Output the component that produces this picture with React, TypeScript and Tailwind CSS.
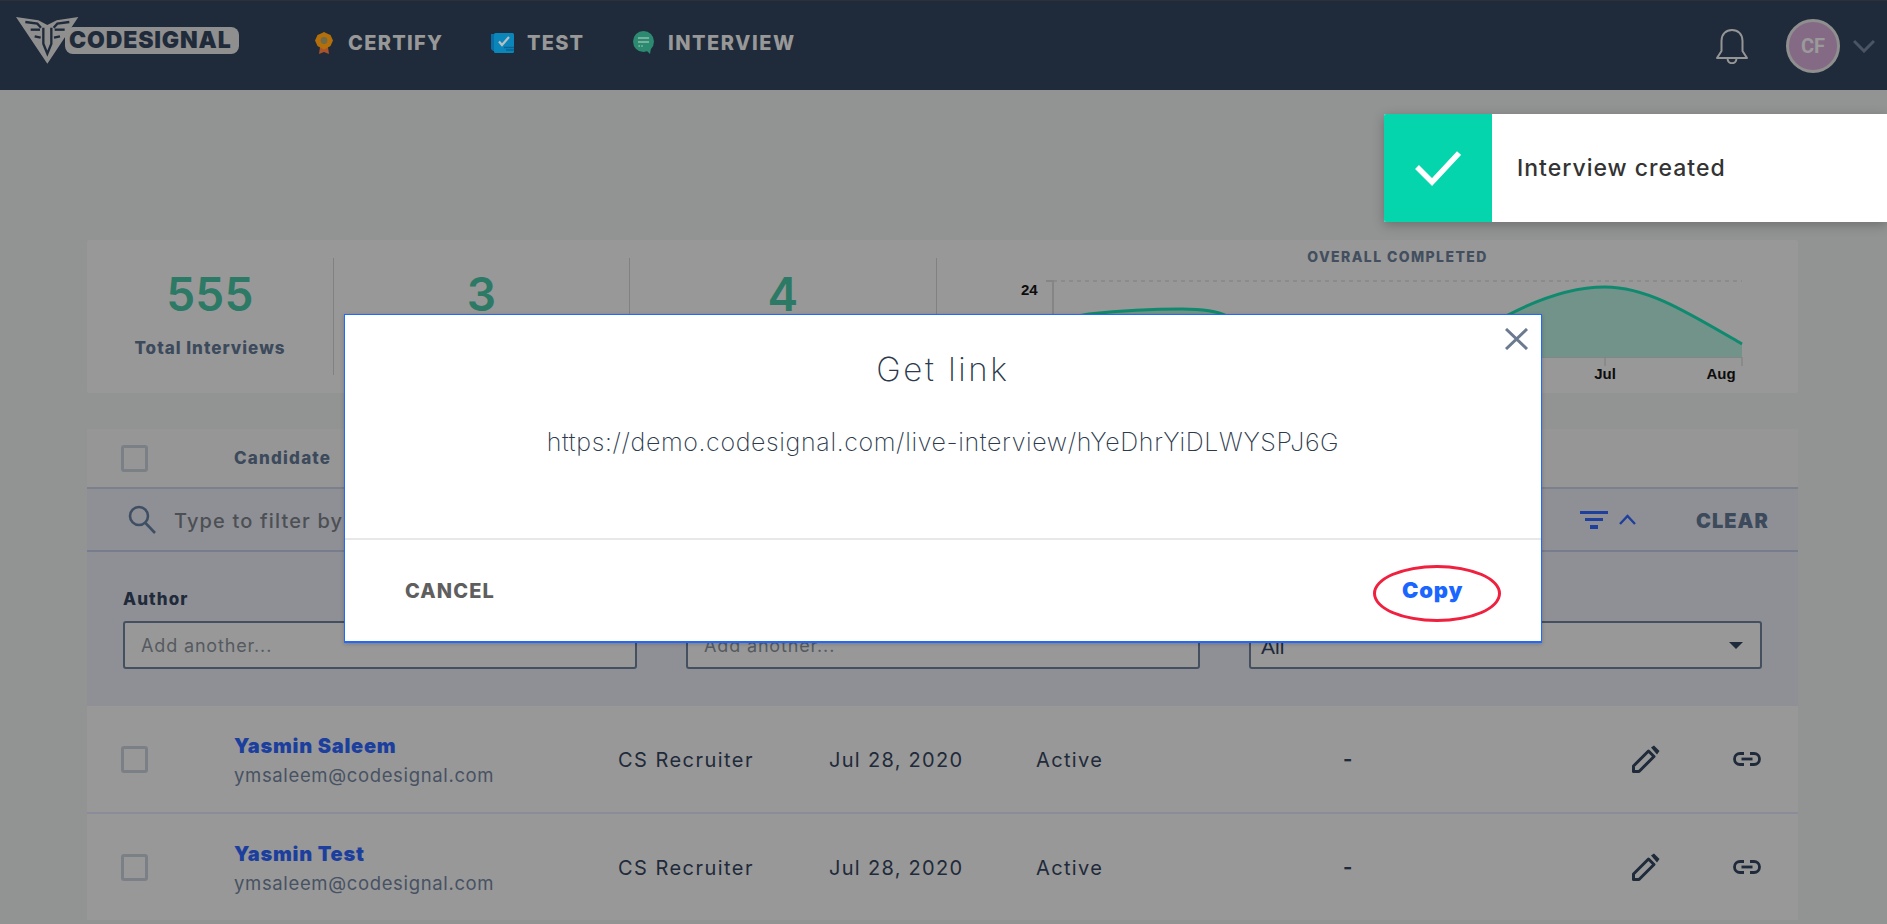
const sans = "font-['Inter',sans-serif]";

function Logo() {
  return (
    <div className="relative w-[230px] h-[60px] shrink-0 -mt-[10px]">
      <svg viewBox="0 0 270 180" className="absolute left-0 top-0 w-[90px] h-[60px]" fill="none">
        <path d="M18 18 L85 28 L112 42 L140 28 L205 18 L112 158 Z" fill="#8f8f8f" />
        <g stroke="#1f2b3a" strokeWidth="7">
          <path d="M46 33 L82 38 L93 50" />
          <path d="M62 56 L90 56" />
          <path d="M74 76 L92 80" />
          <path d="M100 50 L100 98 L112 128 L124 98 L124 50" />
          <path d="M178 33 L142 38 L131 50" />
          <path d="M164 56 L134 56" />
          <path d="M150 76 L132 80" />
        </g>
      </svg>
      <div className={`absolute left-[55px] top-[16px] w-[174px] h-[27px] rounded-[8px] bg-[#8f8f8f] flex items-center pl-[4px] pt-[1px] ${sans} font-black text-[23px] leading-none tracking-[0.85px] text-[#1f2b3a]`}>CODESIGNAL</div>
    </div>
  );
}

function NavItem({ icon, label, active, w, track }: { icon: React.ReactNode; label: string; active?: boolean; w: string; track: string }) {
  return (
    <div className={`relative h-[89px] pb-[6px] flex items-center gap-[15px] ${w}`}>
      {icon}
      <span className={`${sans} font-extrabold text-[20px] ${track} text-[#989898]`}>{label}</span>
      {active && <div className="absolute left-0 right-0 bottom-0 h-[6px] bg-[#2d7f6a]" />}
    </div>
  );
}

function Check({ className }: { className: string }) {
  return <div className={`w-[27px] h-[27px] rounded-[3px] border-[3px] border-[#7b8087] shrink-0 ${className}`} />;
}

function Pencil() {
  return (
    <svg viewBox="0 0 28 28" className="w-[28px] h-[28px]" fill="none">
      <path d="M1.5 26.5 L1.5 21 L16.5 6 L22 11.5 L7 26.5 Z" stroke="#1f2a3a" strokeWidth="3" strokeLinejoin="round" />
      <path d="M19 2.5 L22 0.5 L27.5 6 L25 9.5 Z" fill="#1f2a3a" />
    </svg>
  );
}

function LinkIcon() {
  return (
    <svg viewBox="0 0 28 14" className="w-[28px] h-[14px]" fill="none" stroke="#1f2a3a" strokeWidth="2.8">
      <path d="M11 1.5 H7 a5.5 5.5 0 0 0 0 11 H11" />
      <path d="M17 1.5 H21 a5.5 5.5 0 0 1 0 11 H17" />
      <path d="M8.5 7 H19.5" />
    </svg>
  );
}

function Row({ name }: { name: string }) {
  return (
    <div className={`h-[106px] bg-[#989898] flex items-center ${sans}`}>
      <Check className="ml-[34px]" />
      <div className="ml-[86px] w-[384px] pt-[3px]">
        <div className="font-black text-[20px] leading-[24px] tracking-[0.75px] text-[#1c3f9e]">{name}</div>
        <div className="mt-[5px] text-[18.5px] leading-[24px] tracking-[0.65px] text-[#475263]">ymsaleem@codesignal.com</div>
      </div>
      <div className="w-[211px] pt-[2px] text-[20px] tracking-[1.45px] text-[#1f2a3a]">CS Recruiter</div>
      <div className="w-[207px] pt-[2px] text-[20px] tracking-[1.3px] text-[#1f2a3a]">Jul 28, 2020</div>
      <div className="w-[307px] pt-[2px] text-[20px] tracking-[1.35px] text-[#1f2a3a]">Active</div>
      <div className="w-[289px] text-[20px] font-bold text-[#1f2a3a]">-</div>
      <div className="w-[101px]"><Pencil /></div>
      <LinkIcon />
    </div>
  );
}

function Stat({ n, label, w, border }: { n: string; label: string; w: string; border?: boolean }) {
  return (
    <div className={`${w} h-[117px] flex flex-col items-center shrink-0 ${border ? "border-r border-[#7f8182]" : ""}`}>
      <div className={`${sans} text-[46px] leading-[46px] mt-[13px] font-semibold tracking-[0.3px] text-[#2c7a66]`}>{n}</div>
      <div className={`${sans} text-[17px] leading-[20px] mt-[21px] font-extrabold tracking-[1px] text-[#3c4a5c]`}>{label}</div>
    </div>
  );
}

function Chart() {
  const line = "M116 81 C128 78 140 76 152 74 C190 70 220 69 245 69 C262 69 280 71 290 76 C380 100 500 110 573 74 C610 55 640 47 668 47 C710 47 750 72 805 104";
  return (
    <div className="flex-1 relative h-[153px] -mt-[18px]">
      <div className={`${sans} pt-[9px] text-center pl-[60px] text-[14px] leading-[16px] font-extrabold tracking-[1.4px] text-[#434f5f]`}>OVERALL COMPLETED</div>
      <svg viewBox="0 0 861 153" className="absolute left-0 top-0 w-[861px] h-[153px]" fill="none">
        <path d="M116 41 H805" stroke="#858788" strokeWidth="1.5" strokeDasharray="4 4" />
        <path d="M109 41 H116 V117 H805" stroke="#838586" strokeWidth="2" />
        <path d="M668 117 V126 M805 117 V126" stroke="#838586" strokeWidth="1.5" />
        <path d={`${line} V117 H116 Z`} fill="#72938a" />
        <path d={line} stroke="#0f8a6e" strokeWidth="3" />
        <text x="84" y="55" fontFamily="Liberation Sans" fontWeight="700" fontSize="15" fill="#0d0d0d">24</text>
        <text x="668" y="139" textAnchor="middle" fontFamily="Liberation Sans" fontWeight="700" fontSize="15" fill="#0d0d0d">Jul</text>
        <text x="784" y="139" textAnchor="middle" fontFamily="Liberation Sans" fontWeight="700" fontSize="15" fill="#0d0d0d">Aug</text>
      </svg>
    </div>
  );
}

function FilterField({ label, text, select, w }: { label: string; text: string; select?: boolean; w: string }) {
  return (
    <div className={w}>
      <div className={`${sans} font-extrabold text-[17px] leading-[20px] tracking-[1.1px] text-[#1f2a3a]`}>{label}</div>
      <div className={`mt-[12px] h-[48px] border-2 border-[#44505f] rounded-[3px] bg-[#989898] flex items-center justify-between ${select ? "pl-[10px] pr-[17px]" : "pl-[16px]"}`}>
        <span className={`${select ? "font-['Liberation_Sans',sans-serif] text-[21px] text-[#1f2a3a] pt-[3px]" : `${sans} text-[18px] tracking-[0.85px] text-[#555a60]`}`}>{text}</span>
        {select && <span className="w-0 h-0 border-x-[7px] border-x-transparent border-t-[7px] border-t-[#1f2a3a]" />}
      </div>
    </div>
  );
}

export default function App() {
  return (
    <div className="relative w-[1887px] h-[924px] overflow-hidden bg-[#929493]">
      <header className="h-[90px] bg-[#1f2b3a] border-t border-[#2d3035] flex items-center pl-[10px] pr-[12px]">
        <Logo />
        <nav className="flex ml-[75px]">
          <NavItem w="w-[176px]" track="tracking-[1.3px]" label="CERTIFY" icon={
            <svg viewBox="0 0 18 22" className="w-[18px] h-[22px]">
              <path d="M5 15 L4 22 L9 20 L14 22 L13 15 Z" fill="#a8532b" />
              <path d="M9 0 L12 1.5 L15.5 3 L18 8.5 L15.5 14 L12 16 L9 17.5 L6 16 L2.5 14 L0 8.5 L2.5 3 L6 1.5 Z" fill="#b46f0a" />
              <circle cx="9" cy="8.5" r="3.4" fill="#6f6a48" />
            </svg>
          } />
          <NavItem w="w-[142px]" track="tracking-[1.2px]" label="TEST" icon={
            <svg viewBox="0 0 24 20" className="w-[24px] h-[20px] -mr-[3px]">
              <path d="M0 1 H5 V18 H2 L0 16 Z" fill="#0a6ea6" />
              <rect x="3" y="0" width="20" height="20" rx="1.5" fill="#0b86bb" />
              <path d="M8 8.5 L11 12 L18 4" stroke="#b8bfc2" strokeWidth="2.2" fill="none" />
              <path d="M13 14.5 H23 M15 17 H23" stroke="#0a6392" strokeWidth="1.3" />
            </svg>
          } />
          <NavItem w="w-[163px]" track="tracking-[1.5px]" label="INTERVIEW" icon={
            <svg viewBox="0 0 21 23" className="w-[21px] h-[23px] -mr-[1px]">
              <circle cx="10.5" cy="10.5" r="10.5" fill="#2c8a70" />
              <path d="M13 19 L17 23 L18 17 Z" fill="#2c8a70" />
              <path d="M5 7 H16 M5 11 H16" stroke="#8fbfb0" strokeWidth="1.5" />
              <path d="M5.5 15 H11" stroke="#8fbfb0" strokeWidth="1.4" strokeDasharray="1.4 1.4" />
            </svg>
          } />
        </nav>
        <div className="ml-auto flex items-center">
          <svg viewBox="0 0 32 36" className="w-[32px] h-[36px]" fill="none" stroke="#959595" strokeWidth="2">
            <path d="M1 30 L5.5 23 V13 C5.5 6 10 2 16 2 C22 2 26.5 6 26.5 13 V23 L31 30 Z" strokeLinejoin="round" />
            <path d="M11.5 30 C11.5 37 20.5 37 20.5 30" />
          </svg>
          <div className="ml-[38px] w-[54px] h-[54px] rounded-full bg-[#846a85] border-[3px] border-[#8f8f8f] flex items-center justify-center font-['Roboto',sans-serif] font-bold text-[20px] text-[#9a9a9a]">CF</div>
          <svg viewBox="0 0 22 14" className="ml-[13px] w-[22px] h-[14px]" fill="none" stroke="#4b5462" strokeWidth="3">
            <path d="M1 2 L11 12 L21 2" />
          </svg>
        </div>
      </header>

      <main className="pl-[87px] pr-[89px] pt-[150px]">
        <section className="h-[153px] rounded-[2px] bg-[#989898] flex pt-[18px]">
          <Stat n="555" label="Total Interviews" w="w-[247px]" border />
          <Stat n="3" label="Upcoming" w="w-[296px]" border />
          <Stat n="4" label="Completed" w="w-[307px]" border />
          <Chart />
        </section>

        <section className="mt-[36px]">
          <div className={`h-[60px] bg-[#969696] border-b-2 border-[#7c808c] flex items-center ${sans}`}>
            <Check className="ml-[34px]" />
            <span className="ml-[86px] pt-[2px] font-extrabold text-[17px] tracking-[1.2px] text-[#3c4a5c]">Candidate</span>
          </div>
          <div className={`h-[63px] bg-[#8f9096] border-b-2 border-[#787d8d] flex items-center ${sans}`}>
            <svg viewBox="0 0 28 30" className="ml-[41px] w-[28px] h-[30px]" fill="none" stroke="#3f4f63" strokeWidth="2.6">
              <circle cx="11" cy="11" r="9" />
              <path d="M17.5 18 L27 28" />
            </svg>
            <span className="ml-[18px] pt-[2px] text-[20px] tracking-[1.15px] font-medium text-[#4c4f53]">Type to filter by candidate</span>
            <svg viewBox="0 0 28 18" className="ml-auto w-[28px] h-[18px]">
              <path d="M0 0 H28 V3 H0 Z M5 7 H23 V10 H5 Z M10 14 H18 V18 H10 Z" fill="#1f3f9c" />
            </svg>
            <svg viewBox="0 0 17 11" className="ml-[11px] w-[17px] h-[11px]" fill="none" stroke="#1f3f9c" strokeWidth="2.4">
              <path d="M1 10 L8.5 2 L16 10" />
            </svg>
            <span className="ml-[60px] mr-[29px] pt-[2px] w-[73px] whitespace-nowrap font-black text-[20px] tracking-[1px] text-[#3c4a5c]">CLEAR</span>
          </div>
          <div className="h-[154px] bg-[#8f9096] flex pl-[36px] pr-[36px] pt-[37px] gap-[49px]">
            <FilterField w="w-[514px]" label="Author" text="Add another..." />
            <FilterField w="w-[514px]" label="Tag" text="Add another..." />
            <FilterField w="w-[513px]" label="Status" text="All" select />
          </div>
          <Row name="Yasmin Saleem" />
          <div className="h-[2px] bg-[#8a8c99]" />
          <Row name="Yasmin Test" />
        </section>
      </main>

      {/* toast */}
      <div className="absolute left-[1384px] top-[114px] w-[503px] h-[108px] bg-white rounded-l-[2px] flex items-center shadow-[0_3px_12px_rgba(0,0,0,0.25)]">
        <div className="w-[108px] h-full bg-[#05d5ac] rounded-l-[2px] flex items-center justify-center">
          <svg viewBox="0 0 46 36" className="w-[46px] h-[36px]" fill="none" stroke="#fff" strokeWidth="5.5">
            <path d="M2 17 L17 32 L44 3" />
          </svg>
        </div>
        <span className={`ml-[25px] pt-[1px] ${sans} font-medium text-[23px] tracking-[1px] text-[#333]`}>Interview created</span>
      </div>

      {/* modal */}
      <div className="absolute left-[344px] top-[314px] w-[1198px] h-[329px] bg-white border border-b-[2px] border-[#2268ff] flex flex-col shadow-[0_1px_4px_rgba(0,0,0,0.2)]">
        <svg viewBox="0 0 23 22" className="absolute right-[13px] top-[13px] w-[23px] h-[22px]" fill="none" stroke="#6c7a90" strokeWidth="3">
          <path d="M1 1 L22 21 M22 1 L1 21" />
        </svg>
        <div className="h-[225px] border-b-2 border-[#e8e8e8] flex flex-col items-center">
          <div className={`${sans} font-extralight text-[33px] leading-[40px] mt-[34px] tracking-[2.6px] text-[#2c3a4c]`}>Get link</div>
          <div className={`${sans} font-extralight text-[25px] leading-[30px] mt-[38px] tracking-[0.63px] text-[#2c3a4c]`}>https://demo.codesignal.com/live-interview/hYeDhrYiDLWYSPJ6G</div>
        </div>
        <div className="flex-1 flex items-center justify-between pl-[60px] pr-[76px]">
          <span className={`${sans} font-extrabold text-[20px] tracking-[1.1px] text-[#5f5f5f]`}>CANCEL</span>
          <span className={`relative w-[63px] ${sans} font-black text-[22px] tracking-[0.8px] text-[#1a66ff]`}>
            Copy
            <span className="absolute left-[-29px] top-[-9px] w-[128px] h-[57px] rounded-[50%] border-[3px] border-[#f0203f]" />
          </span>
        </div>
      </div>
    </div>
  );
}
